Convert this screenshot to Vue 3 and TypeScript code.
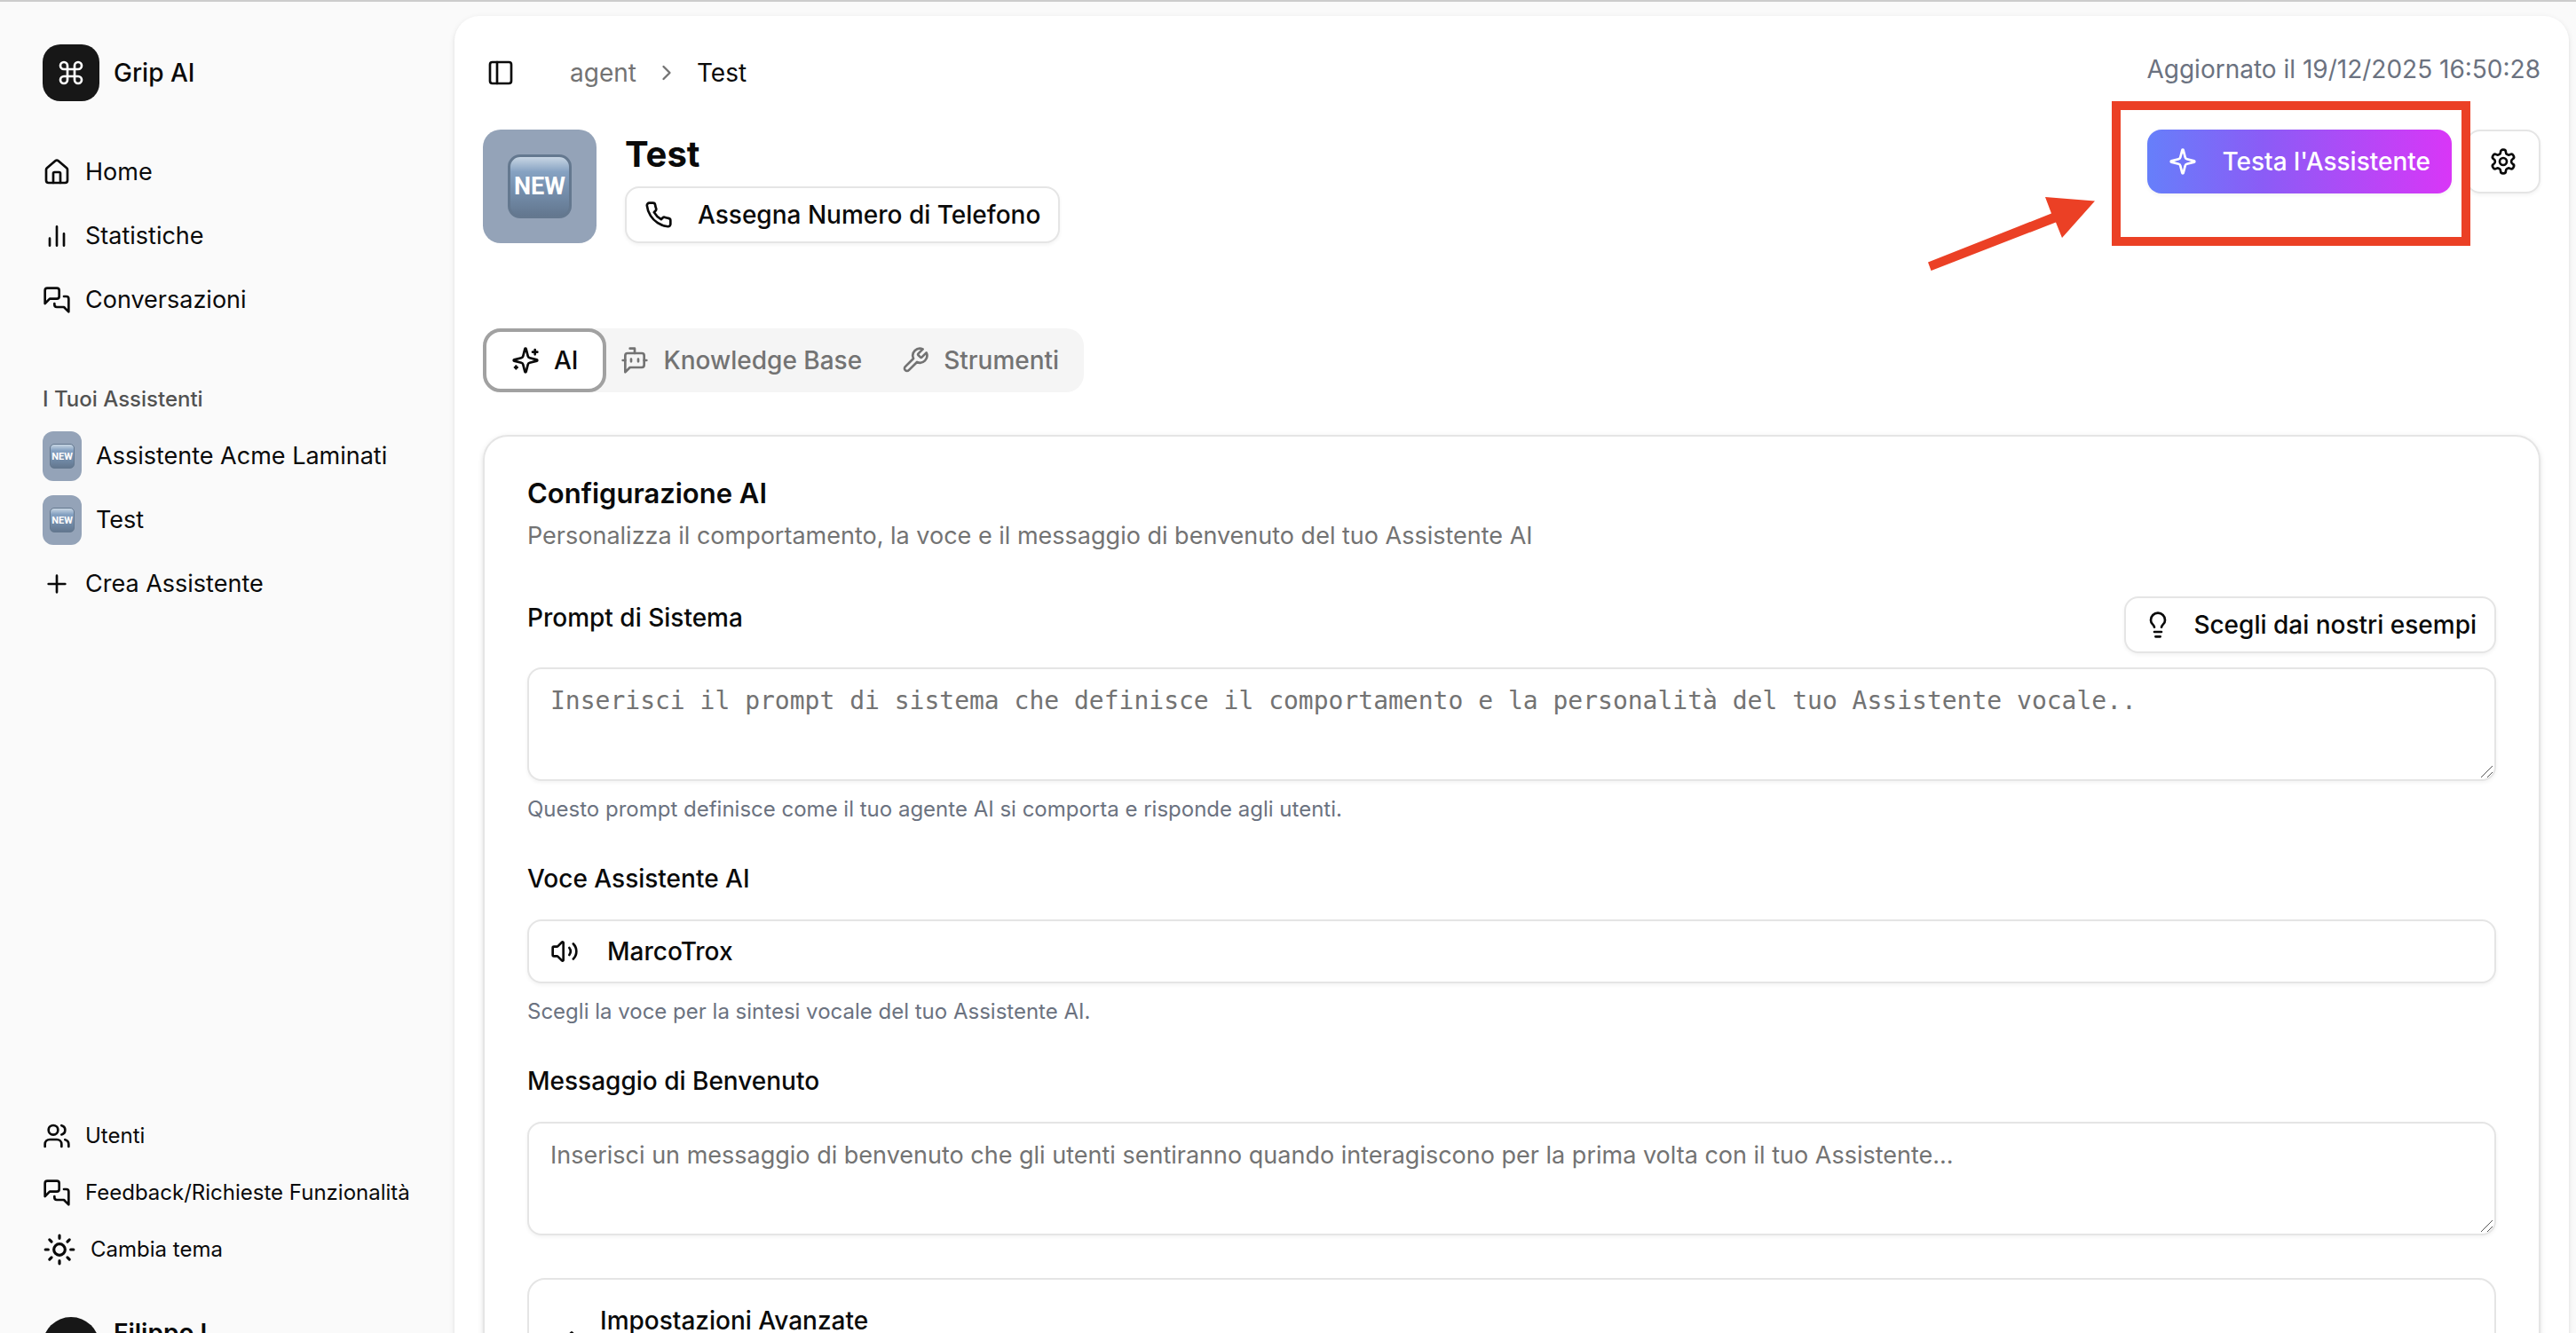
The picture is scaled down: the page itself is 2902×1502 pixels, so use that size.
<script setup lang="ts">
import { ref } from 'vue'

const icons: Record<string, string> = {
  command: '<path d="M15 6v12a3 3 0 1 0 3-3H6a3 3 0 1 0 3 3V6a3 3 0 1 0-3 3h12a3 3 0 1 0-3-3"/>',
  home: '<path d="M15 21v-8a1 1 0 0 0-1-1h-4a1 1 0 0 0-1 1v8"/><path d="M3 10a2 2 0 0 1 .709-1.528l7-6a2 2 0 0 1 2.582 0l7 6A2 2 0 0 1 21 10v9a2 2 0 0 1-2 2H5a2 2 0 0 1-2-2z"/>',
  chart: '<path d="M12 20V4M6 20v-6M18 20V10"/>',
  messages: '<path d="M14 9a2 2 0 0 1-2 2H6l-4 4V4a2 2 0 0 1 2-2h8a2 2 0 0 1 2 2z"/><path d="M18 9h2a2 2 0 0 1 2 2v11l-4-4h-6a2 2 0 0 1-2-2v-1"/>',
  plus: '<path d="M5 12h14M12 5v14"/>',
  users: '<path d="M16 21v-2a4 4 0 0 0-4-4H6a4 4 0 0 0-4 4v2"/><circle cx="9" cy="7" r="4"/><path d="M22 21v-2a4 4 0 0 0-3-3.87M16 3.13a4 4 0 0 1 0 7.75"/>',
  sun: '<circle cx="12" cy="12" r="4"/><path d="M12 2v2M12 20v2M4.93 4.93l1.41 1.41M17.66 17.66l1.41 1.41M2 12h2M20 12h2M6.34 17.66l-1.41 1.41M19.07 4.93l-1.41 1.41"/>',
  panel: '<rect width="18" height="18" x="3" y="3" rx="2"/><path d="M9 3v18"/>',
  chevron: '<path d="m9 18 6-6-6-6"/>',
  phone: '<path d="M22 16.92v3a2 2 0 0 1-2.18 2 19.79 19.79 0 0 1-8.63-3.07 19.5 19.5 0 0 1-6-6 19.79 19.79 0 0 1-3.07-8.67A2 2 0 0 1 4.11 2h3a2 2 0 0 1 2 1.72 12.84 12.84 0 0 0 .7 2.81 2 2 0 0 1-.45 2.11L8.09 9.91a16 16 0 0 0 6 6l1.27-1.27a2 2 0 0 1 2.11-.45 12.84 12.84 0 0 0 2.81.7A2 2 0 0 1 22 16.92z"/>',
  sparkles: '<path d="M9.937 15.5A2 2 0 0 0 8.5 14.063l-6.135-1.582a.5.5 0 0 1 0-.962L8.5 9.936A2 2 0 0 0 9.937 8.5l1.582-6.135a.5.5 0 0 1 .963 0L14.063 8.5A2 2 0 0 0 15.5 9.937l6.135 1.581a.5.5 0 0 1 0 .964L15.5 14.063a2 2 0 0 0-1.437 1.437l-1.582 6.135a.5.5 0 0 1-.963 0z"/><path d="M20 3v4M22 5h-4M4 17v2M5 18H3"/>',
  sparkle: '<path d="M9.937 15.5A2 2 0 0 0 8.5 14.063l-6.135-1.582a.5.5 0 0 1 0-.962L8.5 9.936A2 2 0 0 0 9.937 8.5l1.582-6.135a.5.5 0 0 1 .963 0L14.063 8.5A2 2 0 0 0 15.5 9.937l6.135 1.581a.5.5 0 0 1 0 .964L15.5 14.063a2 2 0 0 0-1.437 1.437l-1.582 6.135a.5.5 0 0 1-.963 0z"/>',
  bot: '<path d="M12 6V2H8"/><path d="m8 18-4 4V8a2 2 0 0 1 2-2h12a2 2 0 0 1 2 2v8a2 2 0 0 1-2 2Z"/><path d="M2 12h2M9 11v2M15 11v2M20 12h2"/>',
  wrench: '<path d="M14.7 6.3a1 1 0 0 0 0 1.4l1.6 1.6a1 1 0 0 0 1.4 0l3.77-3.77a6 6 0 0 1-7.94 7.94l-6.91 6.91a2.12 2.12 0 0 1-3-3l6.91-6.91a6 6 0 0 1 7.94-7.94l-3.76 3.76z"/>',
  settings: '<path d="M12.22 2h-.44a2 2 0 0 0-2 2v.18a2 2 0 0 1-1 1.73l-.43.25a2 2 0 0 1-2 0l-.15-.08a2 2 0 0 0-2.73.73l-.22.38a2 2 0 0 0 .73 2.73l.15.1a2 2 0 0 1 1 1.72v.51a2 2 0 0 1-1 1.74l-.15.09a2 2 0 0 0-.73 2.73l.22.38a2 2 0 0 0 2.73.73l.15-.08a2 2 0 0 1 2 0l.43.25a2 2 0 0 1 1 1.73V20a2 2 0 0 0 2 2h.44a2 2 0 0 0 2-2v-.18a2 2 0 0 1 1-1.73l.43-.25a2 2 0 0 1 2 0l.15.08a2 2 0 0 0 2.73-.73l.22-.39a2 2 0 0 0-.73-2.73l-.15-.08a2 2 0 0 1-1-1.74v-.5a2 2 0 0 1 1-1.74l.15-.09a2 2 0 0 0 .73-2.73l-.22-.38a2 2 0 0 0-2.73-.73l-.15.08a2 2 0 0 1-2 0l-.43-.25a2 2 0 0 1-1-1.73V4a2 2 0 0 0-2-2z"/><circle cx="12" cy="12" r="3"/>',
  bulb: '<path d="M15 14c.2-1 .7-1.7 1.5-2.5 1-.9 1.5-2.2 1.5-3.5A6 6 0 0 0 6 8c0 1 .2 2.2 1.5 3.5.7.7 1.3 1.5 1.5 2.5"/><path d="M9 18h6M10 22h4"/>',
  volume: '<path d="M11 4.702a.705.705 0 0 0-1.203-.498L6.413 7.587A1.4 1.4 0 0 1 5.416 8H3a1 1 0 0 0-1 1v6a1 1 0 0 0 1 1h2.416a1.4 1.4 0 0 1 .997.413l3.383 3.384A.705.705 0 0 0 11 19.298z"/><path d="M16 9a5 5 0 0 1 0 6M19.364 18.364a9 9 0 0 0 0-12.728"/>',
  sort: '<path d="m7 15 5 5 5-5M7 9l5-5 5 5"/>',
}

const mainNav = [
  { icon: 'home', label: 'Home' },
  { icon: 'chart', label: 'Statistiche' },
  { icon: 'messages', label: 'Conversazioni' },
]
const assistants = ['Assistente Acme Laminati', 'Test']
const tabs = [
  { id: 'ai', icon: 'sparkles', label: 'AI' },
  { id: 'kb', icon: 'bot', label: 'Knowledge Base' },
  { id: 'tools', icon: 'wrench', label: 'Strumenti' },
]
const activeTab = ref('ai')
const systemPrompt = ref('')
const welcomeMessage = ref('')
</script>

<template>
  <div class="app">
    <aside class="sidebar">
      <a class="brand" href="#">
        <span class="brand-mark"><svg class="icon" viewBox="0 0 24 24" v-html="icons.command" /></span>
        <span>Grip AI</span>
      </a>

      <nav class="nav-list">
        <a v-for="item in mainNav" :key="item.label" class="nav-item" href="#">
          <svg class="icon" viewBox="0 0 24 24" v-html="icons[item.icon]" />
          <span>{{ item.label }}</span>
        </a>
      </nav>

      <h2 class="nav-title">I Tuoi Assistenti</h2>
      <nav class="nav-list">
        <a v-for="name in assistants" :key="name" class="nav-item agent" href="#">
          <span class="badge"><span class="emoji">NEW</span></span>
          <span>{{ name }}</span>
        </a>
        <a class="nav-item" href="#">
          <svg class="icon" viewBox="0 0 24 24" v-html="icons.plus" />
          <span>Crea Assistente</span>
        </a>
      </nav>

      <div class="sidebar-foot">
        <a class="foot-item" href="#">
          <svg class="icon" viewBox="0 0 24 24" v-html="icons.users" />
          <span>Utenti</span>
        </a>
        <a class="foot-item" href="#">
          <svg class="icon" viewBox="0 0 24 24" v-html="icons.messages" />
          <span>Feedback/Richieste Funzionalità</span>
        </a>
        <button class="foot-item" type="button">
          <svg class="icon icon-lg" viewBox="0 0 24 24" v-html="icons.sun" />
          <span>Cambia tema</span>
        </button>
        <a class="user" href="#">
          <span class="avatar" />
          <span class="user-name">Filippo L</span>
        </a>
      </div>
    </aside>

    <main class="panel">
      <header class="topbar">
        <button class="icon-button" type="button" aria-label="Barra laterale">
          <svg class="icon" viewBox="0 0 24 24" v-html="icons.panel" />
        </button>
        <nav class="crumbs">
          <a href="#">agent</a>
          <svg class="icon icon-sm" viewBox="0 0 24 24" v-html="icons.chevron" />
          <span class="current">Test</span>
        </nav>
        <span class="updated">Aggiornato il 19/12/2025 16:50:28</span>
      </header>

      <section class="hero">
        <div class="badge badge-lg"><span class="emoji">NEW</span></div>
        <div class="hero-info">
          <h1>Test</h1>
          <button class="button" type="button">
            <svg class="icon" viewBox="0 0 24 24" v-html="icons.phone" />
            <span>Assegna Numero di Telefono</span>
          </button>
        </div>
        <div class="hero-actions">
          <button class="button primary" type="button">
            <svg class="icon" viewBox="0 0 24 24" v-html="icons.sparkle" />
            <span>Testa l'Assistente</span>
          </button>
          <button class="button square" type="button" aria-label="Impostazioni">
            <svg class="icon" viewBox="0 0 24 24" v-html="icons.settings" />
          </button>
          <span class="callout" />
          <svg class="arrow" viewBox="0 0 188 84">
            <path d="M0 73.5 139 18.5 132 0 188 4.500 151 46 144 28.500 3.500 83z" />
          </svg>
        </div>
      </section>

      <div class="tabs" role="tablist">
        <button
          v-for="tab in tabs"
          :key="tab.id"
          class="tab"
          :class="{ active: tab.id === activeTab }"
          type="button"
          role="tab"
          :aria-selected="tab.id === activeTab"
          @click="activeTab = tab.id"
        >
          <svg class="icon" viewBox="0 0 24 24" v-html="icons[tab.icon]" />
          <span>{{ tab.label }}</span>
        </button>
      </div>

      <section class="card">
        <h2>Configurazione AI</h2>
        <p class="lead">Personalizza il comportamento, la voce e il messaggio di benvenuto del tuo Assistente AI</p>

        <div class="field">
          <div class="field-head">
            <label for="prompt">Prompt di Sistema</label>
            <button class="button examples" type="button">
              <svg class="icon" viewBox="0 0 24 24" v-html="icons.bulb" />
              <span>Scegli dai nostri esempi</span>
            </button>
          </div>
          <div class="area">
            <textarea
              id="prompt"
              v-model="systemPrompt"
              class="mono"
              placeholder="Inserisci il prompt di sistema che definisce il comportamento e la personalità del tuo Assistente vocale.."
            />
            <svg class="grip" viewBox="0 0 16 16"><path d="M2 15 15 2M9 15l6-6" /></svg>
          </div>
          <p class="hint">Questo prompt definisce come il tuo agente AI si comporta e risponde agli utenti.</p>
        </div>

        <div class="field">
          <label for="voice">Voce Assistente AI</label>
          <button id="voice" class="button voice" type="button">
            <svg class="icon" viewBox="0 0 24 24" v-html="icons.volume" />
            <span>MarcoTrox</span>
          </button>
          <p class="hint">Scegli la voce per la sintesi vocale del tuo Assistente AI.</p>
        </div>

        <div class="field">
          <label for="welcome">Messaggio di Benvenuto</label>
          <div class="area">
            <textarea
              id="welcome"
              v-model="welcomeMessage"
              placeholder="Inserisci un messaggio di benvenuto che gli utenti sentiranno quando interagiscono per la prima volta con il tuo Assistente..."
            />
            <svg class="grip" viewBox="0 0 16 16"><path d="M2 15 15 2M9 15l6-6" /></svg>
          </div>
        </div>

        <button class="advanced" type="button">
          <svg class="icon" viewBox="0 0 24 24" v-html="icons.sort" />
          <span class="advanced-title">Impostazioni Avanzate</span>
        </button>
      </section>
    </main>
  </div>
</template>

<style>
body {
  margin: 0;
  background: #fafafa;
}
</style>

<style scoped>
* {
  box-sizing: border-box;
}
.app {
  display: flex;
  height: 100vh;
  overflow: hidden;
  border-top: 2px solid #ccc;
  background: #fafafa;
  color: #0a0a0a;
  font-family: Inter, "Liberation Sans", sans-serif;
  font-size: 28px;
  line-height: 40px;
}
h1,
h2,
p {
  margin: 0;
}
a {
  color: inherit;
  text-decoration: none;
}
button {
  font: inherit;
  color: inherit;
  background: none;
  border: 0;
  padding: 0;
  cursor: pointer;
}
.icon {
  flex: none;
  width: 32px;
  height: 32px;
  fill: none;
  stroke: currentColor;
  stroke-width: 2;
  stroke-linecap: round;
  stroke-linejoin: round;
}
.icon-sm {
  width: 28px;
  height: 28px;
}
.icon-lg {
  width: 38px;
  height: 38px;
}

/* Sidebar */
.sidebar {
  display: flex;
  flex-direction: column;
  flex: none;
  width: 512px;
  min-height: calc(100vh + 76px);
  padding: 48px 32px 32px 48px;
}
.brand {
  display: flex;
  align-items: center;
  gap: 16px;
  font-weight: 500;
  margin-bottom: 48px;
}
.brand-mark {
  display: flex;
  align-items: center;
  justify-content: center;
  width: 64px;
  height: 64px;
  border-radius: 20px;
  background: #171717;
  color: #fff;
}
.nav-list {
  display: flex;
  flex-direction: column;
  gap: 8px;
}
.nav-item {
  display: flex;
  align-items: center;
  gap: 16px;
  height: 64px;
  font-size: 27px;
  white-space: nowrap;
}
.nav-title {
  margin: 48px 0 0;
  height: 64px;
  font-size: 24px;
  font-weight: 500;
  line-height: 64px;
  color: #525252;
}
.badge {
  display: flex;
  align-items: center;
  justify-content: center;
  flex: none;
  width: 44px;
  height: 56px;
  border-radius: 12px;
  background: #94a3b8;
}
.emoji {
  display: flex;
  align-items: center;
  justify-content: center;
  width: 28px;
  height: 28px;
  border: 1px solid #64788f;
  border-radius: 5px;
  background: linear-gradient(#c8d6e4, #86a2c2 25%, #7690ae 55%, #63778f);
  color: #fff;
  font-family: "Liberation Sans Narrow", Roboto, sans-serif;
  font-size: 11px;
  font-weight: 700;
  line-height: 1;
}
.badge-lg {
  width: 128px;
  height: 128px;
  border-radius: 20px;
}
.badge-lg .emoji {
  width: 72px;
  height: 72px;
  border-width: 3px;
  border-radius: 14px;
  font-size: 27px;
}
.sidebar-foot {
  margin-top: auto;
  font-size: 24px;
}
.foot-item {
  display: flex;
  align-items: center;
  gap: 16px;
  height: 56px;
  margin-bottom: 8px;
  white-space: nowrap;
}
.user {
  display: flex;
  gap: 16px;
  margin-top: 48px;
  height: 64px;
  font-size: 28px;
}
.avatar {
  width: 64px;
  height: 64px;
  border-radius: 50%;
  background: #171717;
}
.user-name {
  font-weight: 600;
  line-height: 36px;
}

/* Main panel */
.panel {
  flex: 1;
  min-width: 0;
  margin: 16px 8px 0 0;
  padding: 0 32px;
  height: 100vh;
  border-radius: 28px 28px 0 0;
  background: #fff;
  box-shadow: 0 2px 6px rgba(0, 0, 0, 0.1), 0 2px 4px -2px rgba(0, 0, 0, 0.1);
}
.topbar {
  display: flex;
  align-items: center;
  height: 128px;
}
.icon-button {
  display: flex;
  padding: 4px;
}
.crumbs {
  display: flex;
  align-items: center;
  gap: 20px;
  margin-left: 58px;
  color: #737373;
}
.crumbs .current {
  color: #0a0a0a;
}
.updated {
  margin-left: auto;
  padding-bottom: 8px;
  color: #6b7280;
}
.hero {
  display: flex;
}
.hero-info {
  display: flex;
  flex-direction: column;
  align-items: flex-start;
  gap: 8px;
  margin-left: 32px;
}
h1 {
  font-size: 40px;
  font-weight: 700;
  line-height: 56px;
}
.button {
  display: flex;
  align-items: center;
  gap: 28px;
  height: 64px;
  padding: 0 20px;
  border: 2px solid #e5e5e5;
  border-radius: 16px;
  background: #fff;
  box-shadow: 0 2px 4px rgba(0, 0, 0, 0.05);
  font-weight: 500;
  white-space: nowrap;
}
.examples {
  gap: 24px;
}
.hero-actions {
  position: relative;
  display: flex;
  align-items: flex-start;
  gap: 16px;
  margin-left: auto;
}
.primary {
  height: 72px;
  padding: 0 24px;
  border: 0;
  background: linear-gradient(90deg, #667ffa, #8b5cf6 38%, #d936f7);
  color: #fff;
}
.square {
  justify-content: center;
  width: 84px;
  height: 72px;
  padding: 0;
}
.callout {
  position: absolute;
  top: -32px;
  right: 79px;
  width: 404px;
  height: 163px;
  border: 10px solid #eb4025;
}
.arrow {
  position: absolute;
  top: 76px;
  right: 502px;
  width: 188px;
  height: 84px;
  fill: #eb4025;
}
.tabs {
  display: flex;
  width: fit-content;
  margin-top: 96px;
  border-radius: 20px;
  background: #f5f5f5;
}
.tab {
  display: flex;
  align-items: center;
  gap: 16px;
  height: 72px;
  padding: 0 28px 0 16px;
  color: #737373;
  font-weight: 500;
}
.tab.active {
  padding: 0 28px;
  border: 4px solid #a1a1a1;
  border-radius: 20px;
  background: #fff;
  color: #0a0a0a;
}
.card {
  margin-top: 48px;
  padding: 48px;
  border: 2px solid #e5e5e5;
  border-radius: 28px;
  box-shadow: 0 2px 6px rgba(0, 0, 0, 0.1), 0 2px 4px -2px rgba(0, 0, 0, 0.1);
}
.card h2 {
  font-size: 31px;
  font-weight: 600;
  line-height: 32px;
}
.lead {
  margin-top: 12px;
  color: #737373;
  font-size: 27px;
}
.field {
  display: flex;
  flex-direction: column;
  gap: 16px;
  margin-top: 48px;
}
.field > label {
  margin-bottom: 16px;
  line-height: 28px;
  font-weight: 500;
}
.field-head {
  display: flex;
  justify-content: space-between;
}
.field-head label {
  line-height: 48px;
  font-weight: 500;
}
.area {
  position: relative;
  display: flex;
}
textarea {
  flex: 1;
  height: 128px;
  padding: 16px 24px;
  border: 2px solid #e5e5e5;
  border-radius: 16px;
  background: #fff;
  box-shadow: 0 2px 4px rgba(0, 0, 0, 0.05);
  color: #0a0a0a;
  font: inherit;
  font-size: 27px;
  resize: none;
}
textarea.mono {
  font-family: "DejaVu Sans Mono", monospace;
  font-size: 28px;
}
textarea::placeholder {
  color: #737373;
  opacity: 1;
}
.grip {
  position: absolute;
  right: 3px;
  bottom: 3px;
  width: 16px;
  height: 16px;
  fill: none;
  stroke: #555;
}
.hint {
  color: #6b7280;
  font-size: 24px;
  line-height: 32px;
}
.voice {
  gap: 32px;
  height: 72px;
  padding: 0 24px;
}
.advanced {
  display: flex;
  align-items: center;
  gap: 16px;
  width: 100%;
  margin-top: 48px;
  padding: 26px 32px;
  border: 2px solid #e5e5e5;
  border-radius: 20px;
  text-align: left;
}
.advanced-title {
  height: 88px;
  font-weight: 500;
}
</style>
